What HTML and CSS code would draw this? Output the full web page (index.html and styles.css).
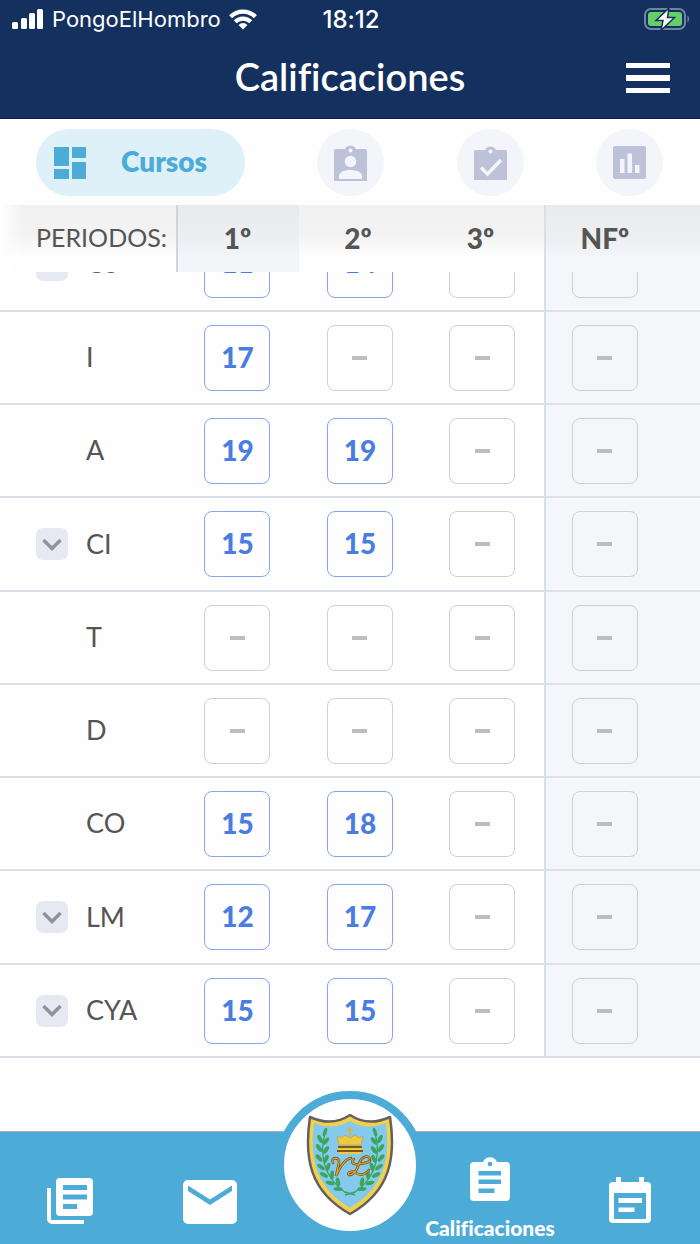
FILE: index.html
```html
<!DOCTYPE html>
<html lang="es">
<head>
<meta charset="utf-8">
<meta name="viewport" content="width=device-width, initial-scale=1">
<title>Calificaciones</title>
<link rel="stylesheet" href="styles.css">
</head>
<body>
<div class="app">
  <header class="top">
    <div class="status">
      <div class="carrier">
        <svg width="32" height="20" viewBox="0 0 32 20" fill="#fff" aria-hidden="true"><rect x="0" y="13" width="6" height="7" rx="1.5"/><rect x="9" y="9" width="6" height="11" rx="1.5"/><rect x="17" y="4" width="6" height="16" rx="1.5"/><rect x="25" y="0" width="6" height="20" rx="1.5"/></svg>
        <span>PongoElHombro</span>
        <svg class="wifi" width="28" height="21" viewBox="0 0 28 21" aria-hidden="true"><g fill="none" stroke="#fff" stroke-width="4.2"><path d="M1.600 7.700a17.600 17.600 0 0 1 24.800 0"/><path d="M6.200 12.800a11 11 0 0 1 15.600 0"/></g><path d="M14 20.500l-4.400-4.600a6.200 6.200 0 0 1 8.800 0z" fill="#fff"/></svg>
      </div>
      <div class="clock">18:12</div>
      <svg class="battery" width="46" height="24" viewBox="0 0 46 24" aria-hidden="true"><rect x="1" y="2" width="40" height="20" rx="6" fill="none" stroke="#7184a2" stroke-width="2"/><path d="M43.500 8.500c2 1 2 6 0 7z" fill="#7184a2"/><rect x="4" y="5" width="34" height="14" rx="3" fill="#65cf68"/><path d="M25 1L12 13.500h7L17 23.500 30.500 10.500H23.500z" fill="#fff" stroke="#14305f" stroke-width="1.500"/></svg>
    </div>
    <div class="titlebar">
      <h1>Calificaciones</h1>
      <button class="menu" type="button" aria-label="Menú"><svg width="44" height="32" viewBox="0 0 44 32" fill="#fff"><path d="M0 1h44v5H0zM0 13h44v6H0zM0 26h44v5H0z"/></svg></button>
    </div>
  </header>

  <div class="tabs">
    <button class="tab active" type="button">
      <svg width="34" height="34" viewBox="0 0 34 34" fill="#4dabd7"><path d="M0 1h15v19H0zM18 1h14v11H18zM0 23h15v10H0zM18 16h14v17H18z"/></svg>
      <span>Cursos</span>
    </button>
    <button class="tab" type="button" aria-label="Alumno"><svg width="33" height="36" viewBox="0 0 33 36"><path d="M2 4h9a6 6 0 0 1 11 0h9a2 2 0 0 1 2 2v30H0V6a2 2 0 0 1 2-2z" fill="#bdc2d9"/><g fill="#f4f5fa"><circle cx="16.500" cy="5.500" r="2"/><circle cx="16.500" cy="16.500" r="5.800"/><path d="M5 34v-3c0-8 23-8 23 0v3z"/></g></svg></button>
    <button class="tab" type="button" aria-label="Tareas"><svg width="33" height="34" viewBox="0 0 33 34"><path d="M1.500 4H11a6 6 0 0 1 11 0h9.500A1.500 1.500 0 0 1 33 5.500V34H0V5.500A1.500 1.500 0 0 1 1.500 4z" fill="#bdc2d9"/><circle cx="16.500" cy="5.500" r="2" fill="#f4f5fa"/><path d="M7 21.500l6.500 6.500L27 14" fill="none" stroke="#f4f5fa" stroke-width="3.600"/></svg></button>
    <button class="tab" type="button" aria-label="Estadísticas"><svg width="33" height="33" viewBox="0 0 33 33"><rect width="33" height="33" rx="2" fill="#bdc2d9"/><path d="M7 13h4.500v14H7zM14.500 7.500H19V27h-4.500zM22 19h4.500v8H22z" fill="#f4f5fa"/></svg></button>
  </div>

  <main>
    <table class="grades">
      <colgroup><col class="c-name"><col class="c-term"><col class="c-term"><col class="c-term"><col></colgroup>
      <thead>
        <tr><th class="name" scope="col">PERIODOS:</th><th class="current" scope="col"><span>1º</span></th><th scope="col"><span>2º</span></th><th scope="col"><span>3º</span></th><th class="final" scope="col"><span>NFº</span></th></tr>
      </thead>
      <tbody id="rows"></tbody>
    </table>
  </main>

  <nav class="bottom">
    <a href="#noticias" aria-label="Noticias"><svg width="46" height="46" viewBox="0 0 46 46"><path d="M2 10v31a3 3 0 0 0 3 3h32" fill="none" stroke="#fff" stroke-width="4"/><rect x="9" y="0" width="37" height="38" rx="4" fill="#fff"/><path d="M16 7h24v5H16zM16 16.500h24v5H16zM16 26h14v5H16z" fill="#4dabd7"/></svg></a>
    <a href="#mensajes" aria-label="Mensajes"><svg width="54" height="44" viewBox="0 0 54 44"><rect width="54" height="44" rx="5" fill="#fff"/><path d="M5 5.500L27 19.500 49 5.500V11L27 25 5 11z" fill="#4dabd7"/></svg></a>
    <a class="home" href="#inicio" aria-label="Inicio">
      <svg width="90" height="104" viewBox="0 0 90 104">
        <path d="M5 4Q27 14 45 2Q63 14 85 4C91 44 86 78 45 101C4 78-1 44 5 4z" fill="#f2d04a" stroke="#65605f" stroke-width="2.500" stroke-linejoin="round"/>
        <path d="M9 10Q28 18 45 8Q62 18 81 10C85 44 81 73 45 95C9 73 5 44 9 10z" fill="#83caee"/>
        <g id="branch"><path d="M20 20C14 42 19 65 41 80" fill="none" stroke="#3da45c" stroke-width="1.300"/>
        <g fill="#3da45c"><ellipse cx="20" cy="19" rx="1.800" ry="4.500" transform="rotate(18 20 19)"/><ellipse cx="15" cy="26" rx="2" ry="4.500" transform="rotate(-28 15 26)"/><ellipse cx="21" cy="28" rx="2" ry="4.500" transform="rotate(38 21 28)"/><ellipse cx="14" cy="35" rx="2" ry="4.500" transform="rotate(-35 14 35)"/><ellipse cx="21" cy="37" rx="2" ry="4.500" transform="rotate(35 21 37)"/><ellipse cx="14" cy="45" rx="2" ry="4.500" transform="rotate(-42 14 45)"/><ellipse cx="21" cy="46" rx="2" ry="4.500" transform="rotate(25 21 46)"/><ellipse cx="16" cy="54" rx="2" ry="4.500" transform="rotate(-52 16 54)"/><ellipse cx="23" cy="54" rx="2" ry="4.500" transform="rotate(18 23 54)"/><ellipse cx="19" cy="62" rx="2" ry="4.500" transform="rotate(-62 19 62)"/><ellipse cx="27" cy="62" rx="2" ry="4.500" transform="rotate(5 27 62)"/><ellipse cx="25" cy="70" rx="2" ry="4.500" transform="rotate(-75 25 70)"/><ellipse cx="33" cy="69" rx="2" ry="4.500" transform="rotate(-12 33 69)"/><ellipse cx="33" cy="76" rx="2" ry="4.500" transform="rotate(-88 33 76)"/></g></g>
        <use href="#branch" transform="matrix(-1 0 0 1 90 0)"/>
        <path d="M40 79l10 3M50 79l-10 3" stroke="#3da45c" stroke-width="1.500"/>
        <path d="M32 23l4 2 4-3 5 3 5-3 4 3 4-2-2 9H34z" fill="#f2c83e" stroke="#c89a28" stroke-width=".6"/><path d="M45 14v8M42.500 17h5" stroke="#e0b132" stroke-width="2"/><path d="M33 33h24v2H33zM32 37h26v2H32z" fill="#79581c"/><path d="M33 35h24v2H33zM34 39h22v2H34z" fill="#f2c83e"/>
        <g fill="none" stroke="#785319" stroke-width="2.600" stroke-linecap="round"><path d="M28 50c-3-6 7-7 6 0l-3 13c3-7 8-17 15-18"/><path d="M65 46c-2-5-9-2-11 5-2 6-5 11-10 11-3-2 3-5 7-2 5 3 9 2 13-3M49 46c-4 3-1 6 5 5 5-1 9-1 11-3"/></g>
        <g fill="none" stroke="#dba329" stroke-width="1.200" stroke-linecap="round"><path d="M28 50c-3-6 7-7 6 0l-3 13c3-7 8-17 15-18"/><path d="M65 46c-2-5-9-2-11 5-2 6-5 11-10 11-3-2 3-5 7-2 5 3 9 2 13-3M49 46c-4 3-1 6 5 5 5-1 9-1 11-3"/></g>
      </svg>
    </a>
    <a class="selected" href="#calificaciones"><svg width="40" height="44" viewBox="0 0 40 44"><path d="M4 5h9a7.500 7.500 0 0 1 14 0h9a4 4 0 0 1 4 4v31a4 4 0 0 1-4 4H4a4 4 0 0 1-4-4V9a4 4 0 0 1 4-4z" fill="#fff"/><circle cx="20" cy="7" r="2.300" fill="#4dabd7"/><path d="M8.500 14H31v4.500H8.500zM8.500 22.500H31V27H8.500zM8.500 31.500h16V36h-16z" fill="#4dabd7"/></svg><span>Calificaciones</span></a>
    <a href="#agenda" aria-label="Agenda"><svg width="42" height="47" viewBox="0 0 42 47"><path d="M4 5h3V0h5v5h18V0h5v5h3a4 4 0 0 1 4 4v33a4 4 0 0 1-4 4H4a4 4 0 0 1-4-4V9a4 4 0 0 1 4-4z" fill="#fff"/><path d="M5 16h32v26H5z" fill="#4dabd7"/><path d="M9.500 21H33v5H9.500zM9.500 30.500h16v4.500h-16z" fill="#fff"/></svg></a>
  </nav>
</div>
<script src="app.js"></script>
</body>
</html>
```
FILE: styles.css
```css
* { box-sizing: border-box; }
body { margin: 0; background: #fefefe; color: #555; font-family: Lato, "Liberation Sans", sans-serif; font-variant-ligatures: none; }
button { border: 0; padding: 0; background: none; font: inherit; color: inherit; }
svg { display: block; flex: none; }

.app { min-height: 100vh; display: flex; flex-direction: column; }

.top { background: #14305f; color: #fff; border-bottom: 1px solid #081d48; }
.status { display: grid; grid-template-columns: 1fr auto 1fr; align-items: center; height: 38px; padding: 0 10px 0 12px; font-family: Inter, sans-serif; font-size: 22px; }
.carrier { display: flex; align-items: center; gap: 8px; }
.clock { font-size: 24px; font-weight: 500; }
.battery { justify-self: end; }
.titlebar { display: grid; grid-template-columns: 1fr auto 1fr; align-items: center; height: 80px; padding: 0 30px; }
.titlebar h1 { grid-column: 2; margin: 0; padding-bottom: 4px; font-size: 38px; line-height: 44px; font-weight: 600; }
.menu { justify-self: end; }

.tabs { display: flex; justify-content: space-between; align-items: center; padding: 10px 37px 9px 36px; }
.tab { display: flex; align-items: center; justify-content: center; width: 67px; height: 67px; border-radius: 34px; background: #f4f5fa; }
.tab.active { width: 209px; gap: 33px; padding: 0 18px; justify-content: flex-start; background: #def1f9; color: #4dabd7; font-size: 28px; line-height: 34px; font-weight: 800; }
.tab span { padding-bottom: 4px; }

main { flex: 1; }
.grades { width: 100%; table-layout: fixed; border-collapse: separate; border-spacing: 0; }
.c-name { width: 25.2%; }
.c-term { width: 17.5%; }
.grades th, .grades td { padding: 0; text-align: left; vertical-align: middle; }
.grades thead th { height: 67px; font-size: 28px; line-height: 34px; font-weight: 900; background: linear-gradient(#f1f1f1, #f3f3f3 45%, #fefefe 80%); }
.grades thead th.name { padding: 0 0 4px 36px; font-size: 25px; font-weight: 400; white-space: nowrap; background: linear-gradient(90deg, #fefefe, transparent 24px), linear-gradient(#f1f1f1, #f3f3f3 45%, #fefefe 80%); }
.grades thead th.current { border-left: 2px solid #ced4e0; background: linear-gradient(#e9eaec, #edeef1 50%, #f4f5f9 80%); }
.grades thead th.final { background: linear-gradient(#e9ebed, #edeef1 50%, #f5f6f9 80%); }
.grades thead span { display: block; width: 66px; margin-left: 26px; padding-bottom: 2px; text-align: center; }
.grades .final { border-left: 2px solid #d7dfe8; background: #f5f6f9; }
.grades tbody th, .grades tbody td { height: 93px; border-bottom: 2px solid #dae1e9; }
.grades tbody .cut th, .grades tbody .cut td { height: 40px; }
.grades tbody tr:nth-child(4n) > * { height: 94px; }

.subject { display: flex; align-items: center; height: 66px; padding-left: 36px; gap: 18px; font-size: 27px; font-weight: 400; }
.subject.plain { padding-left: 86px; }
.subject span { padding-bottom: 2px; }
.toggle { display: flex; align-items: center; justify-content: center; width: 32px; height: 32px; border-radius: 7px; background: #e6e9f2; }
.box { display: flex; align-items: center; justify-content: center; width: 66px; height: 66px; margin-left: 28px; border: 1px solid #d0d0d2; border-radius: 8px; font-size: 28px; line-height: 34px; font-weight: 900; color: #bdbdbd; }
.final .box { margin-left: 26px; }
.box.graded { padding-bottom: 2px; border-color: #85a5ef; color: #4a7de2; }
.none { width: 15px; height: 4px; background: #bdbdbd; }

.cut .clip { display: flex; flex-direction: column; justify-content: flex-end; height: 38px; padding-bottom: 12px; overflow: hidden; }
.cut .subject, .cut .box { flex: none; }
.cut .subject span, .cut .graded { padding-bottom: 6px; }

.bottom { display: grid; grid-template: 112px / repeat(5, minmax(0, 1fr)); background: #4dabd7; border-top: 1px solid #a7b4bc; }
.bottom a { display: flex; flex-direction: column; align-items: center; justify-content: flex-end; padding-bottom: 20px; color: #fff; text-decoration: none; font-size: 21px; line-height: 28px; font-weight: 900; }
.bottom .selected { padding-bottom: 2px; gap: 13px; }
.bottom .home { justify-self: center; align-self: end; justify-content: center; width: 148px; height: 148px; padding: 0; margin-bottom: 5px; border: 8px solid #4dabd7; border-radius: 50%; background: #fff; }
```
FILE: app.js
```js
const subjects = [
  { name: "CS", open: true, grades: [11, 14], cut: true },
  { name: "I", grades: [17] },
  { name: "A", grades: [19, 19] },
  { name: "CI", open: true, grades: [15, 15] },
  { name: "T", grades: [] },
  { name: "D", grades: [] },
  { name: "CO", grades: [15, 18] },
  { name: "LM", open: true, grades: [12, 17] },
  { name: "CYA", open: true, grades: [15, 15] }
];
const chevron = '<svg width="20" height="13" viewBox="0 0 20 13"><path d="M1.500 2L10 10.500 18.500 2" fill="none" stroke="#8d91a2" stroke-width="3.500"/></svg>';

document.getElementById("rows").innerHTML = subjects.map(s => {
  const wrap = html => s.cut ? `<div class="clip">${html}</div>` : html;
  const toggle = s.open ? `<button class="toggle" type="button" aria-label="Desplegar ${s.name}">${chevron}</button>` : "";
  const cells = [0, 1, 2, 3].map(i => {
    const grade = s.grades[i];
    const box = grade ? `<div class="box graded">${grade}</div>` : '<div class="box"><div class="none"></div></div>';
    return `<td${i === 3 ? ' class="final"' : ""}>${wrap(box)}</td>`;
  }).join("");
  return `<tr${s.cut ? ' class="cut"' : ""}><th scope="row">${wrap(`<div class="subject${s.open ? "" : " plain"}">${toggle}<span>${s.name}</span></div>`)}</th>${cells}</tr>`;
}).join("");
```
